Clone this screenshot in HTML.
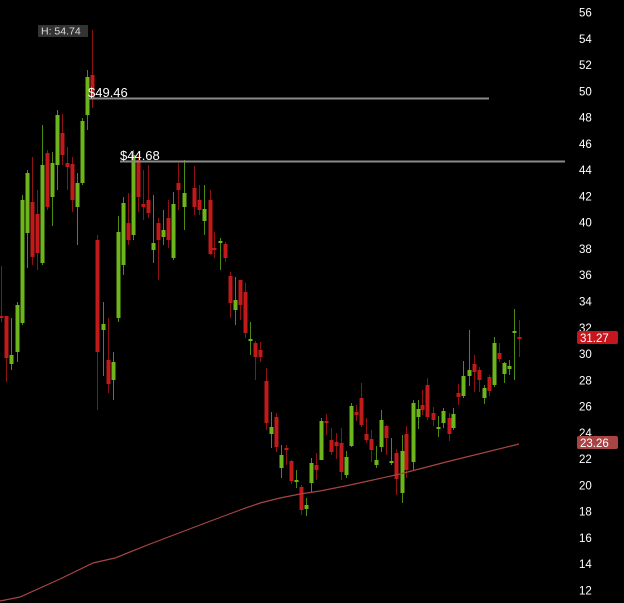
<!DOCTYPE html>
<html><head><meta charset="utf-8"><style>
html,body{margin:0;padding:0;background:#000;width:624px;height:603px;overflow:hidden}
svg{display:block}
text{font-family:"Liberation Sans",sans-serif}
</style></head><body>
<svg width="624" height="603" viewBox="0 0 624 603" xmlns="http://www.w3.org/2000/svg">
<rect width="624" height="603" fill="#000"/>
<g id="c"></g>
<polyline fill="none" stroke="#a84444" stroke-width="1.2" points="0,601 20,597 60,579 93,563 115,558 150,544 200,525 240,510 260,503 280,498 300,494 320,491 350,485 400,474 450,461 519,444"/>
<line x1="88" y1="98.5" x2="489" y2="98.5" stroke="#8a8a8a" stroke-width="2"/>
<line x1="120" y1="161.5" x2="565" y2="161.5" stroke="#8a8a8a" stroke-width="2"/>
<text x="88" y="97" fill="#fff" font-size="13">$49.46</text>
<text x="120" y="160" fill="#fff" font-size="13">$44.68</text>
<rect x="38" y="25" width="50" height="12" fill="#333"/>
<text x="41" y="34.5" fill="#ddd" font-size="10.5">H: 54.74</text>
<g fill="#fff" font-size="11.5" id="ax"></g>
<rect x="577" y="331" width="41" height="13" rx="2" fill="#c4161c"/>
<text x="580" y="342" fill="#fff" font-size="11.5">31.27</text>
<rect x="577" y="436" width="41" height="13" rx="2" fill="#a84444"/>
<text x="580" y="447" fill="#fff" font-size="11.5">23.26</text>
</svg>
<script>
var d=[
[1,'r',316,318,266,322],[6,'r',316,358,316,382],[11,'g',355,364,318,370],[17,'g',305,352,302,362],
[22,'g',200,323,195,325],[27,'g',173,233,170,268],[32,'r',202,257,157,265],[37,'r',214,253,190,270],
[42,'g',165,263,125,265],[47,'r',153,207,150,210],[52,'g',163,197,152,226],[57,'g',115,165,110,190],
[62,'r',133,155,114,165],[67,'r',163,167,147,190],[72,'r',164,200,157,212],[77,'g',183,207,173,245],
[82,'g',121,183,118,185],[87,'g',77,115,70,130],[92,'r',75,98,30,108],[97,'r',240,352,235,410],
[103,'g',324,330,302,376],[108,'r',360,384,318,393],[113,'g',362,380,352,400],[118,'g',232,318,216,322],
[123,'g',203,265,197,275],[128,'r',223,240,193,245],[133,'g',155,235,150,240],[138,'r',160,197,155,212],
[143,'r',204,207,170,220],[148,'r',200,213,165,218],[153,'g',243,250,195,263],[158,'r',223,240,218,280],
[163,'g',230,237,210,245],[168,'r',218,240,200,248],[173,'g',204,258,192,260],[178,'r',183,190,163,210],
[184,'g',193,207,160,230],[194,'r',188,207,166,215],[199,'r',200,210,185,215],[204,'g',209,221,185,235],
[210,'r',200,254,190,255],[214,'r',248,250,232,258],[220,'g',241,243,238,270],[225,'r',244,258,242,262],
[230,'r',276,303,272,318],[235,'g',300,310,277,325],[240,'r',280,305,280,320],[245,'r',292,333,283,338],
[250,'g',339,341,322,355],[255,'r',343,357,341,380],[260,'r',350,357,342,362],[266,'r',381,423,368,430],
[271,'g',427,434,412,448],[276,'r',417,447,413,452],[281,'g',455,468,445,478],[286,'r',448,450,445,465],
[291,'r',461,481,460,484],[296,'g',480,482,470,488],[301,'r',487,510,485,515],[306,'g',505,509,498,516],
[311,'g',463,483,458,492],[316,'r',465,470,453,480],[321,'g',421,460,418,460],[326,'r',421,423,414,435],
[331,'r',440,452,428,455],[336,'r',442,446,433,459],[341,'r',443,472,428,480],[346,'g',457,475,451,478],
[351,'g',406,446,403,447],[356,'r',412,415,405,421],[361,'r',398,425,383,427],[366,'r',434,440,418,443],
[371,'r',439,450,430,462],[376,'g',460,465,446,468],[381,'g',420,447,410,452],[386,'r',426,438,425,455],
[391,'g',461,463,438,465],[396,'r',453,479,449,495],[402,'g',451,493,435,503],[406,'r',434,470,426,478],
[413,'g',403,462,400,470],[418,'g',409,417,400,429],[422,'r',405,410,390,415],[427,'r',385,417,378,420],
[433,'r',413,420,407,426],[438,'g',427,429,416,437],[443,'g',411,423,408,428],[449,'r',418,434,413,441],
[453,'g',414,428,408,430],[458,'r',393,397,384,405],[463,'g',376,396,361,398],[469,'g',370,376,330,386],
[474,'r',364,372,355,392],[479,'r',370,380,367,392],[484,'g',388,398,385,404],[489,'r',377,391,375,396],
[494,'g',343,385,337,387],[499,'r',353,359,343,362],[504,'g',363,374,362,383],[509,'g',366,369,360,375],
[514,'g',331,333,309,380],[519,'r',337,339,320,357]];
var s='';
d.forEach(function(c){var x=c[0],g=c[1]=='g',bf=g?'#6cb61c':'#c21a1a',wf=g?'#4c8a12':'#8e1212';
s+='<rect x="'+x+'" y="'+c[4]+'" width="1" height="'+(c[5]-c[4])+'" fill="'+wf+'"/>';
var h=Math.max(2,c[3]-c[2]);s+='<rect x="'+(x-1.5)+'" y="'+c[2]+'" width="4" height="'+h+'" fill="'+bf+'"/>';});
document.getElementById('c').innerHTML=s;
var a='';for(var p=56;p>=12;p-=2){var y=12+(56-p)*13.136;a+='<text x="579" y="'+(y+4.5).toFixed(1)+'">'+p+'</text>';}
document.getElementById('ax').innerHTML=a;
</script>
</body></html>
